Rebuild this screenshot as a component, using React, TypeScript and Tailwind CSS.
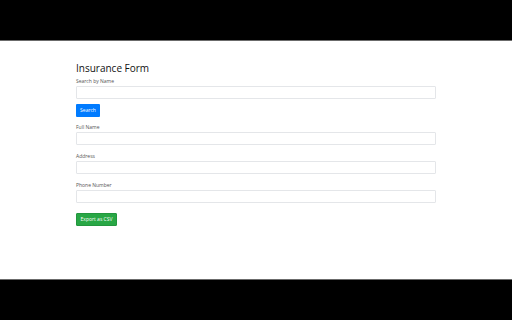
export default function App() {
  const fields = ["Full Name", "Address", "Phone Number"];

  return (
    <div className="flex h-[320px] w-[512px] flex-col bg-black font-['Open_Sans',sans-serif]">
      <div className="h-[40px] shrink-0 bg-black" />
      <div className="flex-1 border-y border-[#6b6b6b] bg-white">
        <div className="ml-[76px] w-[360px] pt-[21px]">
          <h1 className="mb-[4px] text-[10px] leading-[12px] font-medium text-[#111]">Insurance Form</h1>

          <label className="mb-[1px] block h-[7px] text-[5px] leading-[7px] text-[#555]">
            Search by Name
          </label>
          <input className="block h-[13px] w-full rounded-[1px] border border-[#e4e6e9] bg-white" />
          <button className="mt-[5px] mb-[7px] flex h-[13px] w-[24px] items-center justify-center rounded-[1px] bg-[#007bff] text-[5px] text-white">
            Search
          </button>

          {fields.map((f) => (
            <div key={f} className="mb-[8px]">
              <label className="mb-[1px] block h-[7px] text-[5px] leading-[7px] text-[#555]">{f}</label>
              <input className="block h-[13px] w-full rounded-[1px] border border-[#e4e6e9] bg-white" />
            </div>
          ))}

          <button className="mt-[10px] flex h-[13px] w-[41px] items-center justify-center rounded-[1px] border border-[#23963e] bg-[#28a745] text-[5px] text-white">
            Export as CSV
          </button>
        </div>
      </div>
      <div className="h-[40px] shrink-0 bg-black" />
    </div>
  );
}
